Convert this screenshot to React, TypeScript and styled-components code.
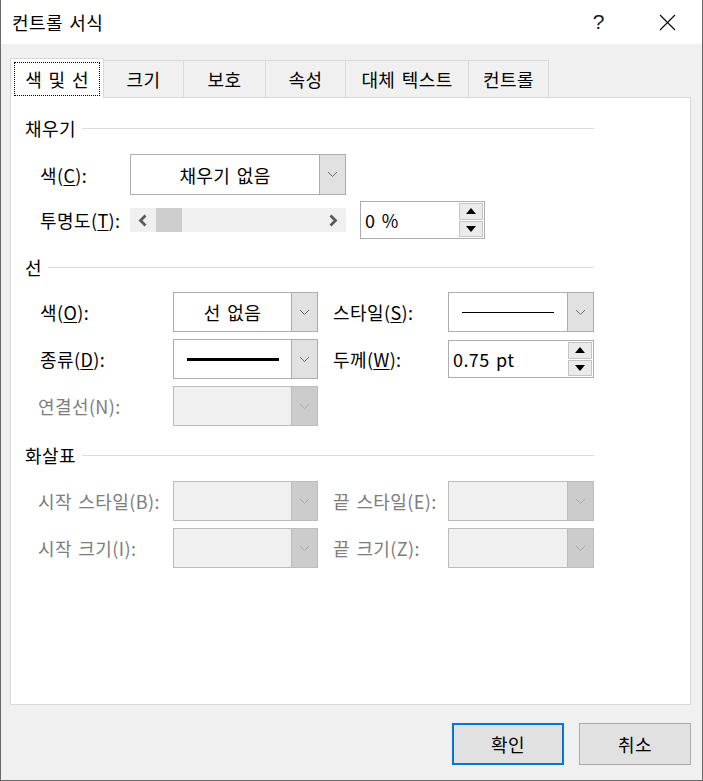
import React from 'react'
import styled, { createGlobalStyle } from 'styled-components'

const GlobalStyle = createGlobalStyle`
  html, body {
    margin: 0;
    padding: 0;
    background: #ffffff;
  }
  body {
    font-family: "Noto Sans CJK KR", "Noto Sans", sans-serif;
    color: #000;
  }
  u {
    text-underline-offset: 2px;
  }
`

const uiText = `
  font-size: 18px;
  line-height: 22px;
  letter-spacing: 0.4px;
  word-spacing: 2px;
`

const Window = styled.div`
  width: 703px;
  height: 781px;
  box-sizing: border-box;
  border: 1px solid #6a6a6a;
  border-top: none;
  display: flex;
  flex-direction: column;
  background: #f0f0f0;
`

const TitleBar = styled.div`
  height: 44px;
  flex-shrink: 0;
  display: flex;
  align-items: center;
  background: #ffffff;
  padding-left: 11px;
`

const Title = styled.div`
  flex: 1;
  ${uiText}
`

const TitleButton = styled.div`
  width: 69px;
  height: 44px;
  display: flex;
  align-items: center;
  justify-content: center;
  font-family: "Liberation Sans", sans-serif;
  font-size: 21px;
  color: #1a1a1a;
`

const Body = styled.div`
  flex: 1;
  padding: 14px 11px 0 9px;
  display: flex;
  flex-direction: column;
`

const TabRow = styled.div`
  display: flex;
  align-items: flex-end;
  height: 39px;
`

const Tab = styled.div<{ $active?: boolean; $w: number }>`
  position: relative;
  z-index: ${(p) => (p.$active ? 2 : 1)};
  box-sizing: border-box;
  width: ${(p) => p.$w}px;
  height: ${(p) => (p.$active ? 40 : 37)}px;
  margin-bottom: ${(p) => (p.$active ? -1 : 0)}px;
  margin-left: -1px;
  border: 1px solid #d9d9d9;
  border-bottom: none;
  background: ${(p) => (p.$active ? '#ffffff' : '#f0f0f0')};
  display: flex;
  align-items: center;
  justify-content: center;
  white-space: nowrap;
  ${uiText}
  padding: ${(p) => (p.$active ? '3px 3px 2px' : '0')};

  &:first-child {
    margin-left: 0;
  }
`

const FocusRect = styled.span`
  flex: 1;
  align-self: stretch;
  display: flex;
  align-items: center;
  justify-content: center;
  border: 1px dotted #000;
`

const Panel = styled.div`
  box-sizing: border-box;
  height: 608px;
  border: 1px solid #d9d9d9;
  background: #ffffff;
  padding: 19px 0 0 14px;
`

const SectionHeader = styled.div<{ $gap: number }>`
  width: 569px;
  height: 22px;
  margin-top: ${(p) => p.$gap}px;
  display: flex;
  align-items: center;
  gap: 6px;
  ${uiText}

  &::after {
    content: '';
    flex: 1;
    height: 1px;
    background: #dcdcdc;
  }
`

const FillGrid = styled.div`
  margin-top: 15px;
  padding-left: 15px;
  display: grid;
  grid-template-columns: 90px 216px 139px;
  grid-template-rows: 41px 38px;
  row-gap: 6px;
  align-items: center;
`

const FieldGrid = styled.div<{ $top: number }>`
  margin-top: ${(p) => p.$top}px;
  padding-left: 15px;
  display: grid;
  grid-template-columns: 133px 145px 130px 146px;
  grid-auto-rows: 40px;
  row-gap: 7px;
  align-items: center;
`

const Label = styled.div<{ $disabled?: boolean; $indent?: boolean; $newRow?: boolean }>`
  ${uiText}
  white-space: nowrap;
  grid-column: ${(p) => (p.$newRow ? 1 : 'auto')};
  color: ${(p) => (p.$disabled ? '#7d7d7d' : '#000')};
  padding-left: ${(p) => (p.$indent ? 15 : 0)}px;
  margin-left: ${(p) => (p.$disabled && !p.$indent ? -2 : 0)}px;
`

const ComboBox = styled.div<{ $disabled?: boolean }>`
  box-sizing: border-box;
  height: 100%;
  display: flex;
  border: 1px solid ${(p) => (p.$disabled ? '#bcbcbc' : '#adadad')};
  background: ${(p) => (p.$disabled ? '#f0f0f0' : '#ffffff')};
`

const ComboValue = styled.div`
  flex: 1;
  display: flex;
  align-items: center;
  justify-content: center;
  ${uiText}
`

const ComboButton = styled.div<{ $disabled?: boolean }>`
  width: 25px;
  display: flex;
  align-items: center;
  justify-content: center;
  border-left: 1px solid ${(p) => (p.$disabled ? '#bcbcbc' : '#adadad')};
  background: ${(p) => (p.$disabled ? '#cccccc' : '#e1e1e1')};
`

const LinePreview = styled.div<{ $thick: number }>`
  width: 92px;
  height: ${(p) => p.$thick}px;
  background: #000;
`

const ScrollBar = styled.div`
  height: 24px;
  display: flex;
  align-items: stretch;
  background: #f0f0f0;
`

const ScrollArrow = styled.div`
  width: 26px;
  display: flex;
  align-items: center;
  justify-content: center;
`

const ScrollTrack = styled.div`
  flex: 1;
  display: flex;
`

const ScrollThumb = styled.div`
  width: 26px;
  background: #cdcdcd;
`

const Spinner = styled.div<{ $width?: number }>`
  box-sizing: border-box;
  height: 38px;
  display: flex;
  justify-self: end;
  width: ${(p) => (p.$width ? `${p.$width}px` : '100%')};
  border: 1px solid #adadad;
  background: #ffffff;
`

const SpinnerValue = styled.div`
  flex: 1;
  display: flex;
  align-items: center;
  padding-left: 4px;
  ${uiText}
`

const SpinnerButtons = styled.div`
  width: 24px;
  padding: 1px 1px 1px 0;
  display: flex;
  flex-direction: column;
  gap: 1px;
`

const SpinnerButton = styled.div`
  flex: 1;
  box-sizing: border-box;
  border: 1px solid #c4c4c4;
  background: #ebebeb;
  display: flex;
  align-items: center;
  justify-content: center;
`

const Footer = styled.div`
  margin-top: 18px;
  display: flex;
  justify-content: flex-end;
  gap: 15px;
`

const DialogButton = styled.button<{ $default?: boolean }>`
  box-sizing: border-box;
  width: 112px;
  height: 42px;
  margin: 0;
  padding: 0;
  background: #e1e1e1;
  border: ${(p) => (p.$default ? '2px solid #0078d7' : '1px solid #adadad')};
  font-family: "Noto Sans CJK KR", sans-serif;
  ${uiText}
  color: #000;
`

const Chevron = ({ disabled }: { disabled?: boolean }) => (
  <svg width="11" height="7" viewBox="0 0 11 7">
    <polyline points="1,1 5.5,5.5 10,1" fill="none" stroke={disabled ? '#a8a8a8' : '#6a6a6a'} strokeWidth="1" />
  </svg>
)

const ArrowLeft = () => (
  <svg width="10" height="13" viewBox="0 0 10 13">
    <polyline points="7.5,1.5 2.5,6.5 7.5,11.5" fill="none" stroke="#5a5a5a" strokeWidth="2.8" />
  </svg>
)

const ArrowRight = () => (
  <svg width="10" height="13" viewBox="0 0 10 13">
    <polyline points="2.5,1.5 7.5,6.5 2.5,11.5" fill="none" stroke="#5a5a5a" strokeWidth="2.8" />
  </svg>
)

const Triangle = ({ up }: { up?: boolean }) => (
  <svg width="10" height="6" viewBox="0 0 10 6">
    <polygon points={up ? '0,6 10,6 5,0' : '0,0 10,0 5,6'} fill="#000" />
  </svg>
)

const CloseIcon = () => (
  <svg width="17" height="17" viewBox="0 0 17 17">
    <path d="M1 1 L16 16 M16 1 L1 16" stroke="#000" strokeWidth="1.1" />
  </svg>
)

interface ComboProps {
  disabled?: boolean
  children?: React.ReactNode
}

const Combo: React.FC<ComboProps> = ({ disabled, children }) => (
  <ComboBox $disabled={disabled}>
    <ComboValue>{children}</ComboValue>
    <ComboButton $disabled={disabled}>
      <Chevron disabled={disabled} />
    </ComboButton>
  </ComboBox>
)

const Spin: React.FC<{ value: string; width?: number }> = ({ value, width }) => (
  <Spinner $width={width}>
    <SpinnerValue>{value}</SpinnerValue>
    <SpinnerButtons>
      <SpinnerButton>
        <Triangle up />
      </SpinnerButton>
      <SpinnerButton>
        <Triangle />
      </SpinnerButton>
    </SpinnerButtons>
  </Spinner>
)

const tabs = [
  { label: '색 및 선', w: 94, active: true },
  { label: '크기', w: 81 },
  { label: '보호', w: 83 },
  { label: '속성', w: 81 },
  { label: '대체 텍스트', w: 124 },
  { label: '컨트롤', w: 81 },
]

export default function App() {
  return (
    <>
      <GlobalStyle />
      <Window>
        <TitleBar>
          <Title>컨트롤 서식</Title>
          <TitleButton>?</TitleButton>
          <TitleButton>
            <CloseIcon />
          </TitleButton>
        </TitleBar>
        <Body>
          <TabRow>
            {tabs.map((t) => (
              <Tab key={t.label} $active={t.active} $w={t.w}>
                {t.active ? <FocusRect>{t.label}</FocusRect> : t.label}
              </Tab>
            ))}
          </TabRow>
          <Panel>
            <SectionHeader $gap={0}>채우기</SectionHeader>
            <FillGrid>
              <Label>
                색(<u>C</u>):
              </Label>
              <Combo>채우기 없음</Combo>
              <Label $newRow>
                투명도(<u>T</u>):
              </Label>
              <ScrollBar>
                <ScrollArrow>
                  <ArrowLeft />
                </ScrollArrow>
                <ScrollTrack>
                  <ScrollThumb />
                </ScrollTrack>
                <ScrollArrow>
                  <ArrowRight />
                </ScrollArrow>
              </ScrollBar>
              <Spin value="0 %" width={125} />
            </FillGrid>

            <SectionHeader $gap={17}>선</SectionHeader>
            <FieldGrid $top={14}>
              <Label>
                색(<u>O</u>):
              </Label>
              <Combo>선 없음</Combo>
              <Label $indent>
                스타일(<u>S</u>):
              </Label>
              <Combo>
                <LinePreview $thick={1} />
              </Combo>

              <Label>
                종류(<u>D</u>):
              </Label>
              <Combo>
                <LinePreview $thick={3} />
              </Combo>
              <Label $indent>
                두께(<u>W</u>):
              </Label>
              <Spin value="0.75 pt" />

              <Label $disabled>연결선(N):</Label>
              <Combo disabled />
            </FieldGrid>

            <SectionHeader $gap={18}>화살표</SectionHeader>
            <FieldGrid $top={15}>
              <Label $disabled>시작 스타일(B):</Label>
              <Combo disabled />
              <Label $disabled $indent>
                끝 스타일(E):
              </Label>
              <Combo disabled />

              <Label $disabled>시작 크기(I):</Label>
              <Combo disabled />
              <Label $disabled $indent>
                끝 크기(Z):
              </Label>
              <Combo disabled />
            </FieldGrid>
          </Panel>
          <Footer>
            <DialogButton $default>확인</DialogButton>
            <DialogButton>취소</DialogButton>
          </Footer>
        </Body>
      </Window>
    </>
  )
}
